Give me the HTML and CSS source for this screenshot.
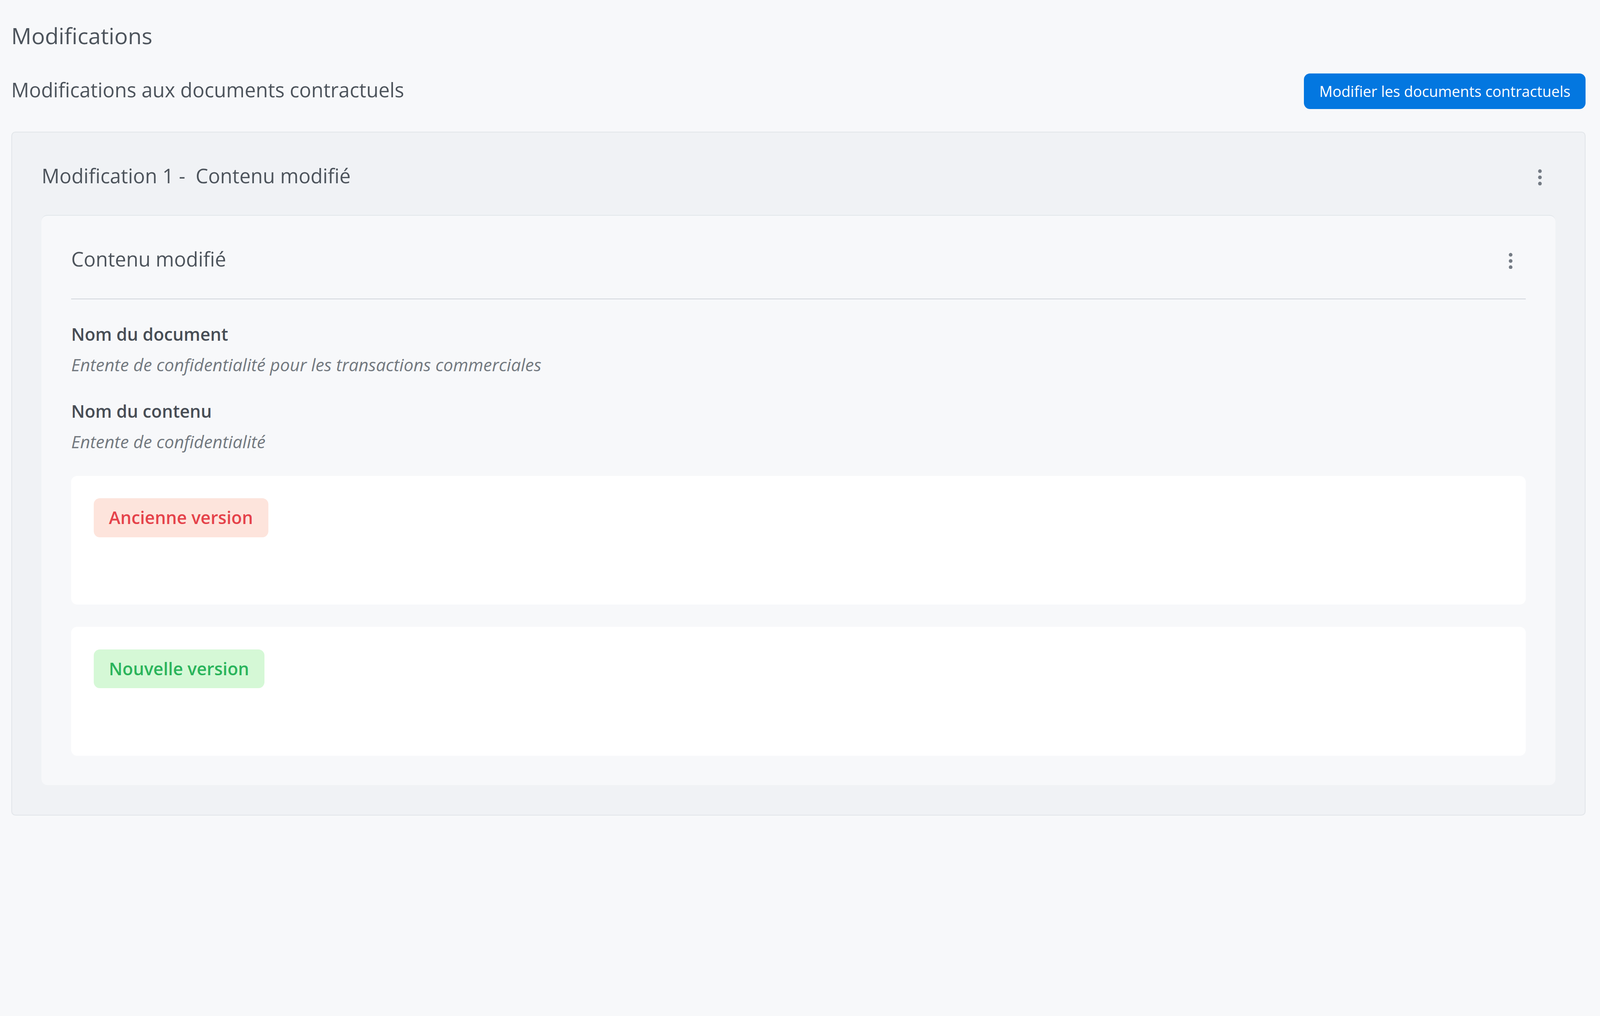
FILE: index.html
```html
<!DOCTYPE html>
<html lang="fr">
<head>
  <meta charset="UTF-8">
  <meta name="viewport" content="width=device-width, initial-scale=1.0">
  <title>Modifications</title>
  <link rel="stylesheet" href="styles.css">
</head>
<body>
  <main class="page">
    <h1 class="page-title">Modifications</h1>

    <div class="toolbar">
      <h2 class="section-title">Modifications aux documents contractuels</h2>
      <button class="btn-primary">Modifier les documents contractuels</button>
    </div>

    <section class="mod-card">
      <div class="card-head">
        <h3>Modification 1 -&nbsp; Contenu modifié</h3>
        <button class="kebab" aria-label="Actions">
          <svg width="4" height="16" viewBox="0 0 4 16"><circle cx="2" cy="1.9" r="1.8"/><circle cx="2" cy="8" r="1.8"/><circle cx="2" cy="14.1" r="1.8"/></svg>
        </button>
      </div>

      <div class="change-card">
        <div class="card-head change-head">
          <h4>Contenu modifié</h4>
          <button class="kebab" aria-label="Actions">
            <svg width="4" height="16" viewBox="0 0 4 16"><circle cx="2" cy="1.9" r="1.8"/><circle cx="2" cy="8" r="1.8"/><circle cx="2" cy="14.1" r="1.8"/></svg>
          </button>
        </div>

        <div class="field">
          <p class="field-label">Nom du document</p>
          <p class="field-value">Entente de confidentialité pour les transactions commerciales</p>
        </div>
        <div class="field">
          <p class="field-label">Nom du contenu</p>
          <p class="field-value">Entente de confidentialité</p>
        </div>

        <div class="version-box">
          <span class="badge badge-old">Ancienne version</span>
        </div>
        <div class="version-box">
          <span class="badge badge-new">Nouvelle version</span>
        </div>
      </div>
    </section>
  </main>
</body>
</html>
```

FILE: styles.css
```css
*{
  margin:0;
  padding:0;
  box-sizing:border-box;
}
/* page is drawn for a 1568px wide layout */
html{
  zoom:2.6122;
}
body{
  background-color:#f7f8fa;
  font-family:"Open Sans", "Liberation Sans", sans-serif;
  color:#4d545c;
}
.page{
  padding:20px 14px 0 11px;
}
.page-title{
  font-size:22px;
  font-weight:400;
  line-height:30px;
}
.toolbar{
  display:flex;
  justify-content:space-between;
  align-items:center;
  margin-top:22px;
}
.section-title{
  font-size:19.5px;
  font-weight:400;
  line-height:24px;
  margin-bottom:3px;
}
.btn-primary{
  height:35px;
  padding:0 15px;
  background-color:#0377e0;
  color:#fff;
  border:none;
  border-radius:6px;
  font-family:inherit;
  font-size:14.5px;
}

/* modification card */
.mod-card{
  margin-top:22px;
  padding:29px;
  background-color:#f0f2f5;
  border:1px solid #e1e5e9;
  border-radius:4px;
}
.card-head{
  display:flex;
  justify-content:space-between;
  align-items:center;
  min-height:30px;
}
.card-head h3,
.card-head h4{
  font-size:19.5px;
  font-weight:400;
  line-height:24px;
  margin-bottom:3px;
}
.kebab{
  width:30px;
  height:30px;
  display:flex;
  justify-content:center;
  align-items:center;
  background:none;
  border:none;
  fill:#747b84;
}

.change-card{
  margin-top:22px;
  padding:29px;
  background-color:#f7f8fa;
  border-top:1px solid #e1e6ea;
  border-radius:6px;
}
.change-head{
  padding-bottom:22px;
  margin-bottom:22px;
  border-bottom:1px solid #d1d6dc;
}
.field{
  margin-bottom:21.5px;
}
.field-label{
  font-size:17px;
  font-weight:600;
  line-height:24px;
  color:#474d55;
  margin-bottom:6px;
}
.field-value{
  font-size:17px;
  font-style:italic;
  line-height:24px;
  color:#72787f;
}

.version-box{
  min-height:126px;
  padding:22px;
  margin-bottom:22px;
  background-color:#fff;
  border-radius:6px;
}
.version-box:last-child{
  margin-bottom:0;
}
.badge{
  display:inline-block;
  padding:0 15px;
  font-size:17px;
  font-weight:600;
  line-height:38px;
  border-radius:6px;
}
.badge-old{
  background-color:#fde4dc;
  color:#e5424a;
}
.badge-new{
  background-color:#d5f8d6;
  color:#2ab45b;
}
```
